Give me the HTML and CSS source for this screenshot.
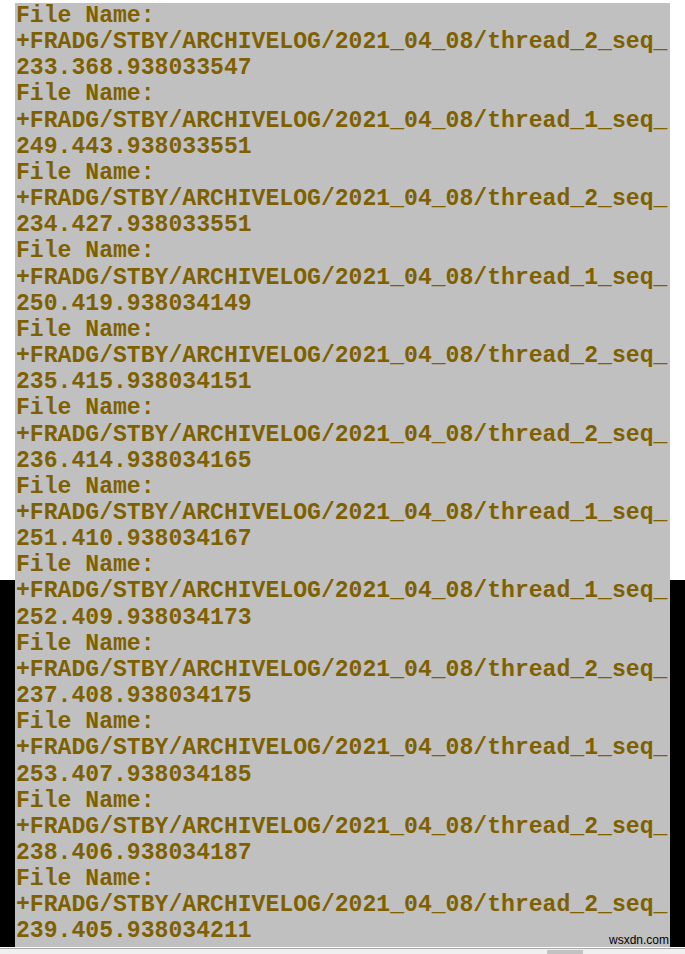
FILE: index.html
```html
<!DOCTYPE html>
<html>
<head>
<meta charset="utf-8">
<link rel="stylesheet" href="styles.css">
</head>
<body>
<div class="top"></div>
<div class="frame">
  <div class="gutter"></div>
  <div class="log">
    <div class="ln">File Name:</div>
    <div class="ln">+FRADG/STBY/ARCHIVELOG/2021_04_08/thread_2_seq_</div>
    <div class="ln">233.368.938033547</div>
    <div class="ln">File Name:</div>
    <div class="ln">+FRADG/STBY/ARCHIVELOG/2021_04_08/thread_1_seq_</div>
    <div class="ln">249.443.938033551</div>
    <div class="ln">File Name:</div>
    <div class="ln">+FRADG/STBY/ARCHIVELOG/2021_04_08/thread_2_seq_</div>
    <div class="ln">234.427.938033551</div>
    <div class="ln">File Name:</div>
    <div class="ln">+FRADG/STBY/ARCHIVELOG/2021_04_08/thread_1_seq_</div>
    <div class="ln">250.419.938034149</div>
    <div class="ln">File Name:</div>
    <div class="ln">+FRADG/STBY/ARCHIVELOG/2021_04_08/thread_2_seq_</div>
    <div class="ln">235.415.938034151</div>
    <div class="ln">File Name:</div>
    <div class="ln">+FRADG/STBY/ARCHIVELOG/2021_04_08/thread_2_seq_</div>
    <div class="ln">236.414.938034165</div>
    <div class="ln">File Name:</div>
    <div class="ln">+FRADG/STBY/ARCHIVELOG/2021_04_08/thread_1_seq_</div>
    <div class="ln">251.410.938034167</div>
    <div class="ln">File Name:</div>
    <div class="ln">+FRADG/STBY/ARCHIVELOG/2021_04_08/thread_1_seq_</div>
    <div class="ln">252.409.938034173</div>
    <div class="ln">File Name:</div>
    <div class="ln">+FRADG/STBY/ARCHIVELOG/2021_04_08/thread_2_seq_</div>
    <div class="ln">237.408.938034175</div>
    <div class="ln">File Name:</div>
    <div class="ln">+FRADG/STBY/ARCHIVELOG/2021_04_08/thread_1_seq_</div>
    <div class="ln">253.407.938034185</div>
    <div class="ln">File Name:</div>
    <div class="ln">+FRADG/STBY/ARCHIVELOG/2021_04_08/thread_2_seq_</div>
    <div class="ln">238.406.938034187</div>
    <div class="ln">File Name:</div>
    <div class="ln">+FRADG/STBY/ARCHIVELOG/2021_04_08/thread_2_seq_</div>
    <div class="ln">239.405.938034211</div>
    <span class="mark">wsxdn.com</span>
  </div>
  <div class="gutter"></div>
</div>
<div class="bottom">
  <div class="thumb"></div>
</div>
</body>
</html>
```
FILE: styles.css
```css
html, body {
  margin: 0;
  padding: 0;
  background: #ffffff;
  overflow: hidden;
}
.top {
  height: 3px;
  background: #ffffff;
}
.frame {
  display: grid;
  grid-template-columns: 15px 655px 15px;
  height: 944px;
}
.gutter {
  background: linear-gradient(to bottom, #ffffff 0, #ffffff 577px, #000000 577px, #000000 100%);
}
.log {
  position: relative;
  background: #c0c0c0;
  overflow: hidden;
  font-family: "Liberation Mono", "Courier New", monospace;
  font-weight: bold;
  font-size: 23.1px;
  line-height: 26.17px;
  color: #7f6000;
}
.ln {
  height: 26.17px;
  padding-left: 1px;
  white-space: pre;
}
.mark {
  position: absolute;
  right: 1px;
  bottom: 0px;
  font-family: "Liberation Sans", Arial, sans-serif;
  font-weight: normal;
  font-size: 12px;
  line-height: 13px;
  color: #000000;
}
.bottom {
  height: 7px;
  border-top: 1px solid #ffffff;
  box-shadow: inset 0 1px 0 #a8a8a8;
  background: #f0f0f0;
  position: relative;
}
.thumb {
  position: absolute;
  left: 547px;
  top: 2px;
  width: 36px;
  height: 5px;
  background: #c2c2c2;
}
```
